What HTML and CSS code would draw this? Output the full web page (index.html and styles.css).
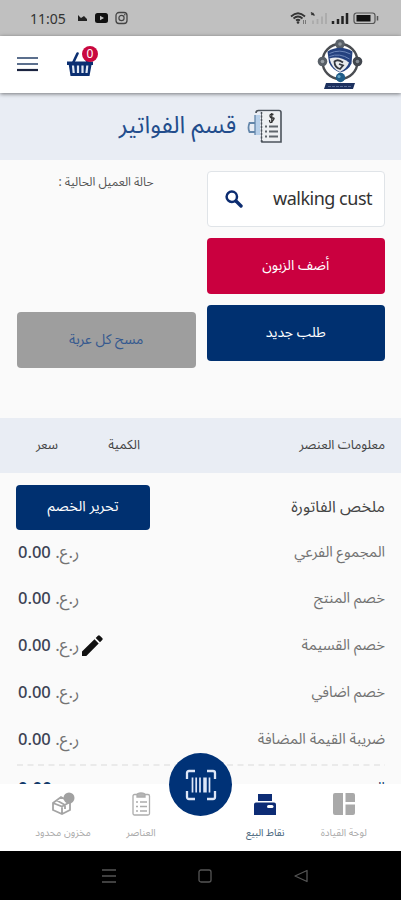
FILE: index.html
```
<!DOCTYPE html>
<html lang="ar" dir="rtl">
<head>
<meta charset="UTF-8">
<title>قسم الفواتير</title>
<link rel="stylesheet" href="styles.css">
</head>
<body>
<div class="screen">
	<div class="status" dir="ltr">
		<span class="clock">11:05</span>
		<svg class="st-left" width="52" height="14" viewBox="0 0 52 14">
			<path d="M1 4v6h9V8L7 5 4 7z" fill="#222"/>
			<rect x="18" y="2" width="13" height="10" rx="2.500" fill="#111"/><path d="M23 4.700v4.600L27 7z" fill="#c0c0c0"/>
			<rect x="39" y="1.500" width="11" height="11" rx="3" fill="none" stroke="#444" stroke-width="1.300"/><circle cx="44.500" cy="7" r="2.600" fill="none" stroke="#444" stroke-width="1.200"/><circle cx="47.800" cy="3.800" r=".8" fill="#444"/>
		</svg>
		<svg class="st-right" width="90" height="14" viewBox="0 0 90 14">
			<path d="M1 5.500Q8-1 15 5.500M3.500 7.500Q8 3.500 12.500 7.500M6 9.500Q8 8 10 9.500" fill="none" stroke="#333" stroke-width="1.800"/><circle cx="8" cy="11.500" r="1.300" fill="#333"/><path d="M13.500 9v4M15.500 9v4" stroke="#777"/>
			<path d="M21 1.500l3.500 3M21.500 4l2-2" stroke="#333" stroke-width="1.500"/><path d="M23 13V9.500M27.500 13V8M32 13V5.500M36 13V2" stroke="#aaa" stroke-width="1.800"/>
			<path d="M43 13v-3M48 13V8M52.500 13V5M57 13V2" stroke="#222" stroke-width="2.500"/>
			<rect x="64" y="2" width="21" height="10.500" rx="2.500" fill="none" stroke="#555" stroke-width="1.200"/><rect x="66.500" y="4" width="14" height="6.500" fill="#111"/><path d="M87.500 5v4.500" stroke="#555" stroke-width="1.500"/>
		</svg>
	</div>

	<div class="header" dir="ltr">
		<svg class="burger" width="21" height="16" viewBox="0 0 21 16"><path d="M0 2h21M0 8h21" stroke="#5b6f8d" stroke-width="2.200"/><path d="M0 14h21" stroke="#1b2440" stroke-width="2.200"/></svg>
		<div class="cart">
			<svg width="27" height="25" viewBox="0 0 27 25"><path d="M10.500 1.500L6 11M18 4l3 7" stroke="#0b2f72" stroke-width="2.600" stroke-linecap="round"/><path d="M0 9.500h26v3.500h-1.500L22.500 24h-19L1.800 13H0z" fill="#0b2f72"/><path d="M6 13.500l.7 7.500M11 13.500V21M15.500 13.500V21M20.300 13.500l-.8 7.500" stroke="#dfe7f3" stroke-width="2.200"/></svg>
			<span class="badge">0</span>
		</div>
		<svg class="logo" width="46" height="51" viewBox="0 0 46 51">
			<circle cx="23" cy="22.500" r="17.500" fill="none" stroke="#4a4d52" stroke-width="2.400"/>
			<circle cx="23" cy="5" r="4.800" fill="#596068"/><circle cx="5.500" cy="22.500" r="4.800" fill="#596068"/><circle cx="40.500" cy="22.500" r="4.800" fill="#41464e"/>
			<circle cx="23" cy="5" r="1.800" fill="#8f969d"/><circle cx="5.500" cy="22.500" r="1.800" fill="#9aa1a8"/><circle cx="40.500" cy="22.500" r="1.800" fill="#858c94"/>
			<path d="M10.500 12.500Q23 5 35.500 12.500l-1 12q-3 7-11.500 9-8-3-11-10z" fill="#24417f"/>
			<path d="M12.500 19.500q10-3 19.500 4-2 6-9 9.500-8-3-10.500-13.500z" fill="#e8eaed"/>
			<path d="M12.500 14.500q10-5 21 .5M12.500 17.500q10-4 20 2.500" fill="none" stroke="#6d87ba" stroke-width="1"/>
			<path d="M26 23.500q-5-4-8.500-1 0 6 5.500 7.500l3-3.500-4-1.500" fill="none" stroke="#33373f" stroke-width="1.800"/>
			<circle cx="23.500" cy="38.500" r="4.700" fill="#205d88"/><circle cx="22" cy="37.500" r="1.600" fill="#67a6c5"/>
			<path d="M9 44h29l-2 6H7z" fill="#1d315f"/><path d="M11 47.500h23" stroke="#5a6d98" stroke-width="1" stroke-dasharray="3 1"/>
		</svg>
	</div>

	<div class="page-title">
		<svg width="35" height="36" viewBox="0 0 35 36">
			<path d="M8 15H2.500q-2 5 0 9H8" fill="none" stroke="#6386aa" stroke-width="1.800"/><path d="M8 7h5v20H8z" fill="#b8d0e9"/><path d="M8 7v20" stroke="#6386aa" stroke-width="1.300"/>
			<path d="M9 5q0-2.500 2.500-2.500H32q2 0 2 2V34H15V6" fill="none" stroke="#4c535b" stroke-width="1.600"/>
			<path d="M15 3.500h17.500v29H15z" fill="#eef0f2"/><path d="M14.500 4v30" stroke="#4c535b" stroke-width="1.500" stroke-dasharray="2 1.500"/>
			<path d="M26.500 6.500q-4-1-3.500 1.500t3 2-.5 3-3-1M24.800 5v10" fill="none" stroke="#333" stroke-width="1.300"/>
			<path d="M18 18.500h2M22 18.500h9M18 23.500h2M22 23.500h9M18 28.500h2M22 28.500h9" stroke="#60666c" stroke-width="1.800"/>
		</svg>
		<h1>قسم الفواتير</h1>
	</div>

	<div class="customer">
		<div class="col">
			<div class="search">
				<span class="search-text" dir="ltr">walking cust</span>
				<svg width="18" height="18" viewBox="0 0 18 18"><circle cx="6.800" cy="6.800" r="5.200" fill="none" stroke="#0c2c70" stroke-width="2.500"/><path d="M11 11l5 5" stroke="#0c2c70" stroke-width="3.400" stroke-linecap="round"/></svg>
			</div>
			<div class="btn red"><span>أضف الزبون</span></div>
			<div class="btn blue"><span>طلب جديد</span></div>
		</div>
		<div class="col left">
			<div class="state">حالة العميل الحالية :</div>
			<div class="btn grey"><span>مسح كل عربة</span></div>
		</div>
	</div>

	<div class="thead">
		<span class="th-info">معلومات العنصر</span>
		<span class="th-qty">الكمية</span>
		<span class="th-price">سعر</span>
	</div>

	<div class="summary">
		<div class="summary-top">
			<span class="summary-title">ملخص الفاتورة</span>
			<div class="btn blue edit"><span>تحرير الخصم</span></div>
		</div>
		<div class="row"><span class="lbl">المجموع الفرعي</span><span class="amount">ر.ع. <b>0.00</b></span></div>
		<div class="row"><span class="lbl">خصم المنتج</span><span class="amount">ر.ع. <b>0.00</b></span></div>
		<div class="row">
			<span class="lbl">خصم القسيمة</span>
			<svg class="pencil" width="21" height="21" viewBox="0 0 21 21"><path d="M0 21v-4.500L12.500 4.200l4.200 4.200L4.300 21zM13.700 3l2.200-2.300q1-1 2 0l2.300 2.300q1 1 0 2L18 7.200z" fill="#111"/></svg>
			<span class="amount">ر.ع. <b>0.00</b></span>
		</div>
		<div class="row"><span class="lbl">خصم اضافي</span><span class="amount">ر.ع. <b>0.00</b></span></div>
		<div class="row"><span class="lbl">ضريبة القيمة المضافة</span><span class="amount">ر.ع. <b>0.00</b></span></div>
		<svg class="dash" width="368" height="2"><path d="M0 1h368" stroke="#dadada" stroke-width="1.200" stroke-dasharray="6 4.500"/></svg>
		<div class="row total"><span>المجموع</span><b>0.00</b></div>
	</div>

	<div class="nav">
		<div class="nav-item">
			<svg width="24" height="24" viewBox="0 0 24 24" fill="#a9a9a9"><path d="M3 1h8v22H3q-2 0-2-2V3q0-2 2-2zM13.500 1H21q2 0 2 2v7h-9.500zM13.500 12.500H23V21q0 2-2 2h-7.500z"/></svg>
			<span>لوحة القيادة</span>
		</div>
		<div class="nav-item active">
			<svg width="24" height="24" viewBox="0 0 24 24"><path d="M5 2h14v7H5zM3 10.500h18q2 0 2 2V23H1V12.500q0-2 2-2z" fill="#0d2c75"/><rect x="14" y="13" width="6.500" height="3" rx="1.500" fill="#fff"/></svg>
			<span>نقاط البيع</span>
		</div>
		<div class="nav-item mid">
			<div class="scan">
				<svg width="32" height="32" viewBox="0 0 32 32" fill="none" stroke="#dce6f7" stroke-width="2.300"><path d="M2 10V4q0-2 2-2h6M22 2h6q2 0 2 2v6M30 22v6q0 2-2 2h-6M10 30H4q-2 0-2-2v-6"/><path d="M7.500 8.500v15M11.200 8.500v15M15 8.500v15M24.500 8.500v15" stroke-width="1.700"/><path d="M20 8.500v15" stroke-width="3.500"/></svg>
			</div>
		</div>
		<div class="nav-item items">
			<svg width="24" height="24" viewBox="0 0 24 24" fill="none" stroke="#adadad" stroke-width="1.300"><rect x="4" y="2.500" width="16.500" height="20.500" rx="1.500"/><path d="M8 3q0-2 4-2t4 2v2H8z" fill="#b5b5b5"/><path d="M7 10h2M11 10h7M7 14.500h2M11 14.500h7M7 19h2M11 19h7"/></svg>
			<span>العناصر</span>
		</div>
		<div class="nav-item stock">
			<svg width="24" height="24" viewBox="0 0 24 24" fill="none" stroke="#a4a4a4" stroke-width="1.800"><path d="M2 11l8-6 9 5v8l-8 4-9-4zM2 11l9 3.500 8-4.500M11 14.500V22M6 8.500l8 4.500v4"/><circle cx="18" cy="6" r="5.500" fill="#a1a1a1" stroke="none"/></svg>
			<span>مخزون محدود</span>
		</div>
	</div>

	<div class="sysbar">
		<svg width="14" height="14" viewBox="0 0 14 14"><path d="M13 1.500v11L1 7z" fill="none" stroke="#555" stroke-width="1.300" stroke-linejoin="round"/></svg>
		<svg width="14" height="14" viewBox="0 0 14 14"><rect x="1" y="1" width="12" height="12" rx="2" fill="none" stroke="#555" stroke-width="1.300"/></svg>
		<svg width="14" height="14" viewBox="0 0 14 14"><path d="M0 1h14M0 7h14M0 13h14" stroke="#555" stroke-width="1.500"/></svg>
	</div>
</div>
</body>
</html>
```
FILE: styles.css
```
* {
	box-sizing: border-box;
}
body {
	margin: 0;
	font-family: "Noto Sans", "Noto Sans Arabic", "DejaVu Sans", sans-serif;
	color: #555;
	background: #fafafa;
}
svg {
	display: block;
	flex: none;
}
.screen {
	width: 401px;
	height: 900px;
	overflow: hidden;
	display: flex;
	flex-direction: column;
}
.status {
	height: 36px;
	flex: none;
	background: #c0c0c0;
	display: flex;
	align-items: center;
	padding: 0 21px 0 30px;
}
.clock {
	font-size: 14px;
	color: #333;
	width: 47px;
}
.st-right {
	margin-left: auto;
}
.header {
	height: 57px;
	flex: none;
	background: #fff;
	display: flex;
	align-items: center;
	padding: 0 38px 0 17px;
	box-shadow: 0 1px 4px rgba(0,0,0,.5);
	z-index: 1;
}
.burger {
	margin-top: -2px;
}
.cart {
	position: relative;
	margin-left: 29px;
}
.badge {
	position: absolute;
	left: 15px;
	top: -6px;
	width: 16px;
	height: 16px;
	border-radius: 50%;
	background: #c9083f;
	color: #fff;
	font-size: 12px;
	line-height: 16px;
	text-align: center;
}
.logo {
	margin-left: auto;
}
.page-title {
	height: 67px;
	flex: none;
	background: #e9edf4;
	display: flex;
	justify-content: center;
	align-items: center;
	gap: 11px;
	padding-bottom: 2px;
}
.page-title h1 {
	margin: 0;
	font-size: 24px;
	font-weight: normal;
	color: #234d8c;
	line-height: 36px;
	padding-bottom: 4px;
}
.customer {
	height: 258px;
	flex: none;
	padding: 11px 16px 0 17px;
	display: flex;
	gap: 11px;
}
.col {
	flex: 1;
	display: flex;
	flex-direction: column;
	gap: 11px;
}
.search {
	height: 56px;
	background: #fff;
	border: 1px solid #e0e4e8;
	border-radius: 4px;
	display: flex;
	align-items: center;
	justify-content: space-between;
	padding: 0 12px 0 17px;
}
.search-text {
	font-size: 18px;
	letter-spacing: -.5px;
	line-height: 24px;
	padding-bottom: 2px;
	color: #333;
}
.btn {
	height: 56px;
	border-radius: 4px;
	display: flex;
	align-items: center;
	justify-content: center;
	color: #fff;
	font-size: 14px;
	padding-bottom: 2px;
}
.red {
	background: #ca003f;
}
.blue {
	background: #003070;
}
.grey {
	background: #9e9e9e;
	color: #35598f;
}
.left {
	justify-content: space-between;
	height: 197px;
}
.state {
	font-size: 12px;
	line-height: 22px;
	padding-right: 42px;
}
.thead {
	height: 55px;
	flex: none;
	background: #e9edf4;
	display: flex;
	align-items: center;
	padding: 0 16px 2px;
	font-size: 13px;
	color: #444;
}
.th-info {
	width: 245px;
}
.th-qty {
	width: 82px;
}
.summary {
	height: 311px;
	flex: none;
	overflow: hidden;
	padding: 12px 16px 0 17px;
}
.summary-top {
	display: flex;
	justify-content: space-between;
	align-items: center;
	height: 45px;
}
.summary-title {
	font-size: 16px;
	color: #444;
	padding-bottom: 2px;
}
.edit {
	width: 134px;
	height: 45px;
	margin-left: -1px;
	font-size: 14.500px;
}
.row {
	height: 47px;
	display: flex;
	align-items: center;
	font-size: 14.800px;
	color: #737373;
	padding-bottom: 2px;
}
.row:nth-child(2) {
	height: 46px;
}
.amount {
	margin-right: auto;
	white-space: nowrap;
	font-size: 17px;
	line-height: 26px;
	padding: 0 0 1px 1px;
}
.amount b {
	font-size: 16.500px;
	font-weight: 500;
	color: #3d4354;
}
.pencil {
	margin-right: auto;
	margin-left: 3px;
}
.pencil + .amount {
	margin-right: 0;
}
.total {
	justify-content: space-between;
	color: #123a6b;
	height: 47px;
}
.total b {
	font-size: 17px;
	padding-left: 1px;
}
.nav {
	height: 67px;
	flex: none;
	background: #fff;
	display: flex;
	padding: 8px 18px 0 19px;
	z-index: 1;
}
.nav-item {
	width: 78.500px;
	flex: none;
	display: flex;
	flex-direction: column;
	align-items: center;
	font-size: 10px;
	color: #aaa;
	gap: 8px;
	white-space: nowrap;
}
.nav-item span {
	line-height: 16px;
}
.nav-item.active {
	color: #3f6078;
}
.nav-item.mid {
	width: 51px;
}
.nav-item.items {
	width: 68px;
}
.nav-item.stock {
	width: 88px;
}
.scan {
	width: 63px;
	height: 63px;
	margin-top: -39px;
	flex: none;
	border-radius: 50%;
	background: #003277;
	display: flex;
	align-items: center;
	justify-content: center;
}
.sysbar {
	height: 49px;
	flex: none;
	background: #000;
	display: flex;
	align-items: center;
	justify-content: center;
	gap: 82px;
	padding-left: 8px;
}
```
